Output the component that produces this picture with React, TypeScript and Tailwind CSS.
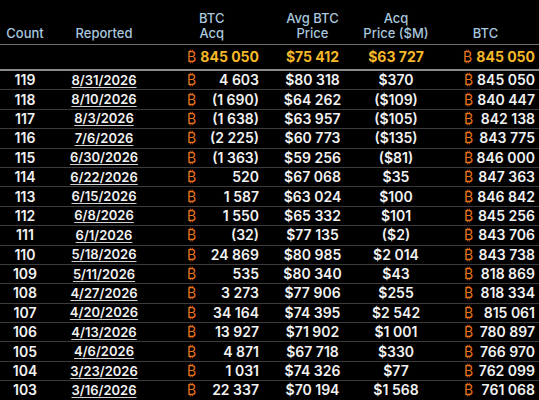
const rows: [number, string, string, string, string, string][] = [
  [119, "8/31/2026", "4 603", "$80 318", "$370", "845 050"],
  [118, "8/10/2026", "(1 690)", "$64 262", "($109)", "840 447"],
  [117, "8/3/2026", "(1 638)", "$63 957", "($105)", "842 138"],
  [116, "7/6/2026", "(2 225)", "$60 773", "($135)", "843 775"],
  [115, "6/30/2026", "(1 363)", "$59 256", "($81)", "846 000"],
  [114, "6/22/2026", "520", "$67 068", "$35", "847 363"],
  [113, "6/15/2026", "1 587", "$63 024", "$100", "846 842"],
  [112, "6/8/2026", "1 550", "$65 332", "$101", "845 256"],
  [111, "6/1/2026", "(32)", "$77 135", "($2)", "843 706"],
  [110, "5/18/2026", "24 869", "$80 985", "$2 014", "843 738"],
  [109, "5/11/2026", "535", "$80 340", "$43", "818 869"],
  [108, "4/27/2026", "3 273", "$77 906", "$255", "818 334"],
  [107, "4/20/2026", "34 164", "$74 395", "$2 542", "815 061"],
  [106, "4/13/2026", "13 927", "$71 902", "$1 001", "780 897"],
  [105, "4/6/2026", "4 871", "$67 718", "$330", "766 970"],
  [104, "3/23/2026", "1 031", "$74 326", "$77", "762 099"],
  [103, "3/16/2026", "22 337", "$70 194", "$1 568", "761 068"],
];

const grid = "grid grid-cols-[50px_108px_107px_95px_72px_107px] items-center whitespace-nowrap";

const Btc = () => <span className="text-[#e8731c] font-normal">₿</span>;

export default function App() {
  return (
    <div
      className="w-[539px] h-[400px] overflow-hidden bg-black text-[#f2f2f2]"
      style={{ fontFamily: "Inter, 'Noto Sans', sans-serif" }}
    >
      <div className={`${grid} h-[45px] border-b border-[#6e6e6e] items-end pb-[3px] text-[13px] leading-[15px] font-medium text-[#a9c7de]`}>
        <div className="text-center">Count</div>
        <div className="text-center">Reported</div>
        <div className="pl-[41px]">
          <div className="inline-block text-center">
            BTC
            <br />
            Acq
          </div>
        </div>
        <div className="text-center">
          Avg BTC
          <br />
          Price
        </div>
        <div className="text-center">
          Acq
          <br />
          Price ($M)
        </div>
        <div className="text-center">BTC</div>
      </div>

      <div className={`${grid} h-[26px] border-b-2 border-[#8a8a8a] text-[14px] leading-none font-bold text-[#f6b928]`}>
        <div />
        <div />
        <div className="flex justify-between pl-[29px] pr-[6px]">
          <Btc />
          <span>845 050</span>
        </div>
        <div className="text-center">$75 412</div>
        <div className="text-center">$63 727</div>
        <div className="flex justify-between pl-[31px] pr-[4px]">
          <Btc />
          <span>845 050</span>
        </div>
      </div>

      {rows.map(([n, date, acq, avg, price, total]) => (
        <div
          key={n}
          className={`${grid} h-[19.4px] border-b border-[#3c3c3c] text-[14px] leading-none font-semibold`}
        >
          <div className="text-center">{n}</div>
          <div className="text-center text-[13px]">
            <span className="underline decoration-[#cfcfcf] underline-offset-2">{date}</span>
          </div>
          <div className="flex justify-between pl-[29px] pr-[6px]">
            <Btc />
            <span>{acq}</span>
          </div>
          <div className="text-center">{avg}</div>
          <div className="text-center">{price}</div>
          <div className="flex justify-between pl-[32px] pr-[4px]">
            <Btc />
            <span>{total}</span>
          </div>
        </div>
      ))}
    </div>
  );
}
